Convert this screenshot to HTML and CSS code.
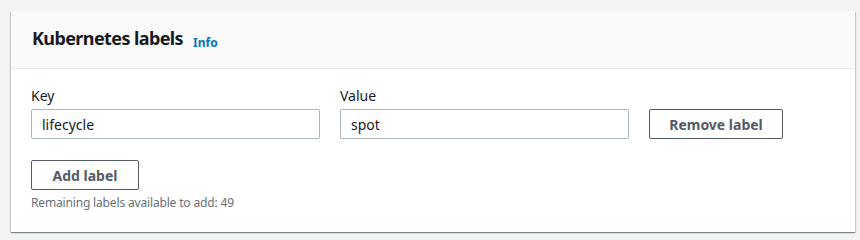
FILE: index.html
```html
<!DOCTYPE html>
<html>

<head>
    <meta charset="utf-8" />
    <title>Kubernetes labels</title>
    <link rel="stylesheet" href="styles.css">
</head>

<body>
    <div class="card">
        <div class="card-head">
            <h2>Kubernetes labels</h2>
            <a href="#" class="info">Info</a>
        </div>
        <div class="card-body">
            <div class="row">
                <div class="field">
                    <label>Key</label>
                    <input type="text" value="lifecycle" />
                </div>
                <div class="field">
                    <label>Value</label>
                    <input type="text" value="spot" />
                </div>
                <button class="btn btn-remove">Remove label</button>
            </div>
            <button class="btn btn-add">Add label</button>
            <p class="hint">Remaining labels available to add: 49</p>
        </div>
    </div>
</body>

</html>
```

FILE: styles.css
```css
body,
h2,
p {
    margin: 0;
    padding: 0;
}

body {
    background: #f2f3f3;
    padding: 11px 5px 10px 11px;
    font-family: "Noto Sans", "Open Sans", Arial, sans-serif;
    color: #16191f;
}

.card {
    background: #fff;
    box-shadow: 0 1px 1px 0 rgba(0, 28, 36, .3), 1px 1px 1px 0 rgba(0, 28, 36, .15), -1px 1px 1px 0 rgba(0, 28, 36, .15);
}

.card-head {
    display: flex;
    align-items: flex-start;
    height: 58px;
    box-sizing: border-box;
    padding: 15px 20px 0 21px;
    background: #fafafa;
    border-bottom: 1px solid #eaeded;
}

.card-head h2 {
    font-size: 18px;
    font-weight: 700;
    line-height: 24px;
    letter-spacing: -0.6px;
}

.info {
    margin: 11px 0 0 10px;
    font-size: 12px;
    line-height: 12px;
    font-weight: 700;
    color: #0073bb;
    text-decoration: none;
}

.card-body {
    padding: 16px 20px 20px 20px;
}

.row {
    display: flex;
    align-items: flex-end;
    gap: 20px;
}

.field {
    display: flex;
    flex-direction: column;
    width: 289px;
}

.field label {
    font-size: 14px;
    line-height: 22px;
    margin-bottom: 2px;
}

.field input {
    height: 30px;
    box-sizing: border-box;
    border: 1px solid #aab7b8;
    border-radius: 2px;
    padding: 0 10px;
    font-family: inherit;
    font-size: 14px;
    color: #16191f;
}

.btn {
    height: 30px;
    box-sizing: border-box;
    background: #fff;
    border: 1px solid #545b64;
    border-radius: 2px;
    font-family: inherit;
    font-size: 14px;
    font-weight: 700;
    color: #545b64;
}

.btn-remove {
    width: 134px;
}

.btn-add {
    width: 108px;
    margin-top: 21px;
    display: block;
}

.hint {
    margin-top: 4px;
    font-size: 12px;
    line-height: 18px;
    letter-spacing: -0.16px;
    color: #687078;
}
```
